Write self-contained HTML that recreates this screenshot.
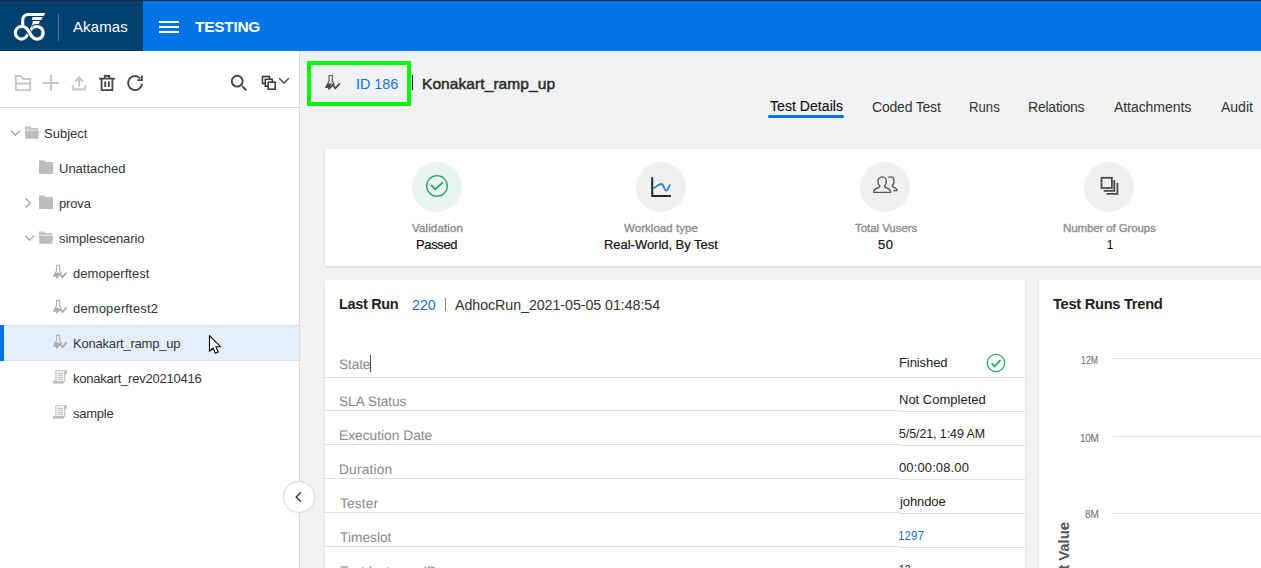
<!DOCTYPE html>
<html lang="en">
<head>
<meta charset="utf-8">
<title>Akamas - Testing</title>
<style>
*{box-sizing:border-box;margin:0;padding:0}
html,body{width:1261px;height:568px;overflow:hidden;background:#f1f2f4;font-family:"Liberation Sans",sans-serif;color:#222}
.abs{position:absolute}
.t{position:absolute;white-space:nowrap;line-height:20px}
#hdr{left:0;top:0;width:1261px;height:51px;background:#0073e7}
#hdrtop{left:0;top:0;width:1261px;height:1px;background:#1c2b3a}
#brand{left:0;top:1px;width:143px;height:50px;background:#00406f}
#side{left:0;top:51px;width:300px;height:517px;background:#fff;border-right:1px solid #dcdcdc}
#tbline{left:0;top:107px;width:299px;height:1px;background:#dcdcdc}
.tr{color:#323435}
#sel{left:0;top:325px;width:299px;height:36px;background:#e5effc;border-top:1px solid #dbe1e8;border-bottom:1px solid #dbe1e8}
#selbar{left:0;top:325px;width:4px;height:36px;background:#0073e7}
.card{position:absolute;background:#fff;box-shadow:0 1px 2px rgba(0,0,0,.12)}
.circ{position:absolute;width:50px;height:50px;border-radius:50%;background:#f0f0f0;top:13px}
.lab{color:#8c8c8c;-webkit-text-stroke:0.35px #8c8c8c}
.val{color:#111;-webkit-text-stroke:0.2px #111}
.fl{color:#8a8a8a;text-rendering:geometricPrecision}
.fv{color:#222}
.ln{position:absolute;height:1px;background:#dedede}
.tab{color:#323435}
/*FIT*/
#akamas{left:73px;top:17px;font-size:15px;letter-spacing:0.120px}
#testing{left:195px;top:17px;font-size:15.5px;letter-spacing:-0.300px}
#t1{left:44px;top:124px;font-size:13px;letter-spacing:0.000px}
#t2{left:59px;top:159px;font-size:13px;letter-spacing:0.000px}
#t3{left:59px;top:194px;font-size:13px;letter-spacing:-0.150px}
#t4{left:59px;top:229px;font-size:13px;letter-spacing:-0.092px}
#t5{left:73px;top:264px;font-size:13px;letter-spacing:0.055px}
#t6{left:73px;top:299px;font-size:13px;letter-spacing:0.150px}
#t7{left:73px;top:334px;font-size:13px;letter-spacing:-0.200px}
#t8{left:73px;top:369px;font-size:13px;letter-spacing:-0.221px}
#t9{left:73px;top:404px;font-size:13px;letter-spacing:-0.240px}
#id186{left:356px;top:74px;font-size:15.3px;letter-spacing:0.000px;transform:scaleX(0.94);transform-origin:0 0}
#ttl{left:422px;top:74px;font-size:15.5px;letter-spacing:0.080px}
#tb1{left:770px;top:96px;font-size:14px;letter-spacing:0.055px}
#tb2{left:872px;top:97px;font-size:14px;letter-spacing:-0.200px}
#tb3{left:969px;top:97px;font-size:14px;letter-spacing:0.000px;transform:scaleX(0.94);transform-origin:0 0}
#tb4{left:1028px;top:97px;font-size:14px;letter-spacing:-0.225px}
#tb5{left:1114px;top:97px;font-size:14px;letter-spacing:-0.060px}
#tb6{left:1221px;top:97px;font-size:14px;letter-spacing:0.000px}
#l1{left:412px;top:218px;font-size:11.5px;letter-spacing:0.133px}
#v1{left:416px;top:235px;font-size:13px;letter-spacing:-0.360px}
#l2{left:624px;top:218px;font-size:11.5px;letter-spacing:0.050px}
#v2{left:604px;top:235px;font-size:13px;letter-spacing:-0.033px}
#l3{left:855px;top:218px;font-size:11.5px;letter-spacing:-0.055px}
#v3{left:878px;top:235px;font-size:13px;letter-spacing:0.600px}
#l4{left:1063px;top:218px;font-size:11.5px;letter-spacing:-0.120px}
#v4{left:1107px;top:235px;font-size:13px;letter-spacing:0.000px;transform:scaleX(0.85);transform-origin:0 0}
#lr{left:339px;top:294px;font-size:14.5px;letter-spacing:-0.343px}
#n220{left:412px;top:295px;font-size:15px;letter-spacing:0.000px;transform:scaleX(0.95);transform-origin:0 0}
#adhoc{left:455px;top:295px;font-size:15px;letter-spacing:-0.067px;transform:scaleX(0.95);transform-origin:0 0}
#f1{left:339px;top:355px;font-size:13.75px;letter-spacing:-0.150px}
#f2{left:339px;top:392px;font-size:13.75px;letter-spacing:-0.067px}
#f3{left:339px;top:426px;font-size:13.75px;letter-spacing:0.000px}
#f4{left:339px;top:460px;font-size:13.75px;letter-spacing:0.171px}
#f5{left:340px;top:494px;font-size:13.75px;letter-spacing:0.120px}
#f6{left:340px;top:528px;font-size:13.75px;letter-spacing:0.000px}
#f7{left:340px;top:562px;font-size:13.75px;letter-spacing:-0.120px}
#g1{left:899px;top:353px;font-size:13px;letter-spacing:-0.086px}
#g2{left:899px;top:390px;font-size:13px;letter-spacing:0.000px}
#g3{left:899px;top:424px;font-size:13px;letter-spacing:-0.043px;transform:scaleX(0.95);transform-origin:0 0}
#g4{left:899px;top:458px;font-size:13px;letter-spacing:0.120px}
#g5{left:900px;top:492px;font-size:13px;letter-spacing:-0.100px}
#g6{left:898px;top:526px;font-size:13px;letter-spacing:0.200px;transform:scaleX(0.88);transform-origin:0 0}
#g7{left:899px;top:560px;font-size:13px;letter-spacing:0.000px;transform:scaleX(0.8);transform-origin:0 0}
#trt{left:1053px;top:294px;font-size:14.7px;letter-spacing:-0.300px}
#y1{left:1081px;top:351px;font-size:10px;letter-spacing:0.000px;transform:scaleX(0.88);transform-origin:0 0}
#y2{left:1080px;top:429px;font-size:10px;letter-spacing:-0.300px}
#y3{left:1085px;top:505px;font-size:10px;letter-spacing:0.000px}
/*ENDFIT*/
</style>
</head>
<body>
<!-- header -->
<div class="abs" id="hdr"></div>
<div class="abs" id="brand"></div>
<div class="abs" id="hdrtop"></div>
<svg class="abs" style="left:0;top:0" width="60" height="51" viewBox="0 0 60 51">
  <g fill="none" stroke="#fff" stroke-width="3.100">
    <path d="M34.800 23 L31 29.700 C29.400 32.600 26.400 39.100 21.600 39.100 A6.300 6.300 0 0 1 21.600 26.500"/>
    <path d="M22.700 27 V20.600 C22.700 17.200 24.700 14.500 28.400 14.500 H44"/>
  </g>
  <path d="M25.500 27.200 C27.600 28.400 28.400 30.600 29.600 32.800 C31.100 35.800 32.800 39.100 36.800 39.100 A6.300 6.300 0 1 0 32.700 28.100" fill="none" stroke="#00406f" stroke-width="4.800"/>
  <path d="M21.400 26.500 C26.300 26.500 27.900 29.600 29.600 32.800 C31.100 35.800 32.800 39.100 36.800 39.100 A6.300 6.300 0 1 0 32.900 27.900" fill="none" stroke="#fff" stroke-width="3.100"/>
  <path d="M27 12.900 H45.300 L43.900 16 H27 Z M32.600 17.100 H42.700 L41.300 19.900 H31.800 Z M32.900 20.900 H40.100 L38.600 24 H32.300 Z" fill="#fff"/>
</svg>
<div class="abs" style="left:58px;top:14px;width:1px;height:27px;background:#4d7a9c"></div>
<div class="t" style="color:#fff" id="akamas">Akamas</div>
<svg class="abs" style="left:159px;top:20px" width="20" height="14" viewBox="0 0 20 14"><path d="M0 2h20M0 7h20M0 12h20" stroke="#fff" stroke-width="2" fill="none"/></svg>
<div class="t" style="font-weight:bold;color:#fff" id="testing">TESTING</div>

<!-- sidebar -->
<div class="abs" id="side"></div>
<div class="abs" id="tbline"></div>
<!-- toolbar icons -->
<svg class="abs" style="left:14px;top:74px" width="18" height="18" viewBox="0 0 18 18" fill="none" stroke="#c6c6c6" stroke-width="1.9"><path d="M1.8 16.1V1.9h4.800l2.600 3.100h7v11.100z M1.8 9.5h14.4"/></svg>
<svg class="abs" style="left:42px;top:74px" width="18" height="18" viewBox="0 0 18 18" fill="none" stroke="#c6c6c6" stroke-width="1.9"><path d="M9 1v16M1 9h16"/></svg>
<svg class="abs" style="left:70px;top:74px" width="18" height="18" viewBox="0 0 18 18" fill="none" stroke="#c6c6c6" stroke-width="1.9"><path d="M2.8 11.300v4.100h12.4v-4.100M9 12.400V4M5.200 7.400l3.800-3.800 3.800 3.800" stroke-width="2.100"/></svg>
<svg class="abs" style="left:98px;top:74px" width="18" height="18" viewBox="0 0 18 18" fill="none" stroke="#444" stroke-width="1.8"><path d="M1 4.6h16M6.8 4.4V1.9h4.4v2.5M3.6 4.6v11.6h10.8V4.6M7.2 7.4v5.6M10.8 7.4v5.6"/></svg>
<svg class="abs" style="left:126px;top:74px" width="18" height="18" viewBox="0 0 18 18" fill="none" stroke="#444" stroke-width="1.8"><path d="M16 9.600A7 7 0 1 1 14.200 4.300M15.900 1.500v4.700h-4.700"/></svg>
<svg class="abs" style="left:230px;top:74px" width="18" height="18" viewBox="0 0 18 18" fill="none" stroke="#444" stroke-width="1.9"><circle cx="7.2" cy="7.2" r="5.4"/><path d="M12.100 12.100l4.300 4.300"/></svg>
<svg class="abs" style="left:261px;top:75px" width="16" height="16" viewBox="0 0 16 16" fill="#fff" stroke="#333" stroke-width="1.5"><rect x="1.5" y="1.5" width="7" height="7"/><rect x="4.3" y="4.3" width="7" height="7"/><rect x="7.2" y="7.2" width="7" height="7"/></svg>
<svg class="abs" style="left:278px;top:76px" width="12" height="10" viewBox="0 0 12 10" fill="none" stroke="#444" stroke-width="1.3"><path d="M1.2 2.2l4.8 4.8 4.8-4.8"/></svg>

<!-- tree -->
<div class="abs" id="sel"></div>
<div class="abs" id="selbar"></div>
<div class="abs" id="tree" style="left:0;top:0;width:299px;height:568px">
  <div class="t tr" id="t1">Subject</div>
  <div class="t tr" id="t2">Unattached</div>
  <div class="t tr" id="t3">prova</div>
  <div class="t tr" id="t4">simplescenario</div>
  <div class="t tr" id="t5">demoperftest</div>
  <div class="t tr" id="t6">demoperftest2</div>
  <div class="t tr" id="t7">Konakart_ramp_up</div>
  <div class="t tr" id="t8">konakart_rev20210416</div>
  <div class="t tr" id="t9">sample</div>
</div>
<svg class="abs" style="left:0;top:108px" width="299" height="330" viewBox="0 108 299 330">
  <defs>
    <g id="chevd"><path d="M-4.500 -2.400L0 2.100L4.500 -2.400" fill="none" stroke="#999" stroke-width="1.1"/></g>
    <g id="chevr"><path d="M-2.300 -4.500L2.200 0L-2.300 4.500" fill="none" stroke="#999" stroke-width="1.1"/></g>
    <g id="fopen"><path d="M0 1.6h5.4l1.2 1.4h6.8v1.8H0z" fill="#c2c2c2"/><path d="M0 5.6h14l-0.6 8.2H0.4z" fill="#bdbdbd"/></g>
    <g id="fclosed"><path d="M0 0.6h5.6l1.2 1.4H14v12H0z" fill="#bdbdbd"/><path d="M5.4 1.5h8.6" stroke="#fff" stroke-width="0.7"/></g>
    <g id="flask" fill="none" transform="scale(0.91)"><path d="M3.500 0.500H7.800M4 0.500V6.200L0.900 12.300M7.300 0.500V6.200L9.600 9.600" stroke="#b5b5b5" stroke-width="1.300"/><path d="M2.300 8.500L7.200 8.200L4.500 13H0z" fill="#adadad"/><path d="M3.400 14.500L7.900 9.900L10.300 13.300L14.800 8.400" stroke="#a8a8a8" stroke-width="1.800"/></g>
    <g id="script" fill="none" stroke="#bdbdbd" stroke-width="1.100"><path d="M2.900 11V0.800H13.200V3.300H11.600M11.700 1V12"/><path d="M4.600 3.300h5.400M4.600 5.300h5.400M4.600 7.300h5.400M4.600 9.200h5.400" stroke="#b0b0b0" stroke-width="0.900"/><path d="M0 12.200h10.800" stroke-width="2.700" stroke="#bbb"/><path d="M11.800 0.800h1.800v2.600h-1.800z" fill="#bdbdbd" stroke="none"/></g>
  </defs>
  <use href="#chevd" x="15.5" y="133"/>
  <use href="#fopen" x="25" y="125"/>
  <use href="#fclosed" x="39" y="160"/>
  <use href="#chevr" x="28" y="203"/>
  <use href="#fclosed" x="39" y="195"/>
  <use href="#chevd" x="29.5" y="238"/>
  <use href="#fopen" x="39" y="230"/>
  <use href="#flask" x="53" y="265"/>
  <use href="#flask" x="53" y="300"/>
  <use href="#flask" x="53" y="335"/>
  <use href="#script" x="53" y="370"/>
  <use href="#script" x="53" y="405"/>
</svg>
<!-- mouse cursor -->
<svg class="abs" style="left:208px;top:334px" width="14" height="22" viewBox="0 0 14 22"><path d="M1.500 1.700V17.300L5 14L7.400 19.300L10.300 18L7.900 12.700H12.500Z" fill="#fff" stroke="#0c0c14" stroke-width="1.150" stroke-linejoin="round"/></svg>

<!-- collapse handle -->
<div class="abs" style="left:283px;top:481px;width:32px;height:32px;border-radius:50%;background:#fff;border:1px solid #dcdcdc;box-shadow:0 0 2px rgba(0,0,0,.08)"></div>
<svg class="abs" style="left:292px;top:490px" width="14" height="14" viewBox="0 0 14 14" fill="none" stroke="#333" stroke-width="1.4"><path d="M8.8 2.2L4.2 7l4.6 4.8"/></svg>

<!-- title -->
<div class="abs" style="left:307px;top:61px;width:104px;height:45px;border:4px solid #05f805"></div>
<svg class="abs" style="left:325px;top:75px" width="17" height="16" viewBox="0 0 17 16" fill="none"><path d="M3.500 0.500H7.800M4 0.500V6.200L0.900 12.300M7.300 0.500V6.200L9.600 9.600" stroke="#5c5c5c" stroke-width="1.200"/><path d="M2.300 8.500L7.200 8.200L4.500 13H0z" fill="#4c4c4c"/><path d="M3.400 14.500L7.900 9.900L10.300 13.300L14.800 8.400" stroke="#474747" stroke-width="1.700"/></svg>
<div class="t" style="color:#1570e3" id="id186">ID 186</div>
<div class="abs" style="left:412px;top:75px;width:1px;height:15px;background:#222"></div>
<div class="t" style="color:#2a2a2a;-webkit-text-stroke:0.5px #2a2a2a" id="ttl">Konakart_ramp_up</div>

<!-- tabs -->
<div class="t tab" style="color:#111;-webkit-text-stroke:0.15px #111" id="tb1">Test Details</div>
<div class="abs" style="left:768px;top:115px;width:76px;height:3px;border-radius:1.5px;background:#0073e7"></div>
<div class="t tab" id="tb2">Coded Test</div>
<div class="t tab" id="tb3">Runs</div>
<div class="t tab" id="tb4">Relations</div>
<div class="t tab" id="tb5">Attachments</div>
<div class="t tab" id="tb6">Audit</div>

<!-- summary card -->
<div class="card" style="left:325px;top:149px;width:960px;height:117px">
  <div class="circ" style="left:87px;background:#e8f5ee"></div>
  <div class="circ" style="left:311px"></div>
  <div class="circ" style="left:535px"></div>
  <div class="circ" style="left:759px"></div>
  <svg class="abs" style="left:100px;top:25px" width="24" height="24" viewBox="0 0 24 24" fill="none" stroke="#27a25f" stroke-width="1.300"><circle cx="12" cy="11.900" r="10.300"/><path d="M6.200 11.200L10.300 15.400L17.800 8.400" stroke-width="1.700"/></svg>
  <svg class="abs" style="left:324px;top:26px" width="24" height="24" viewBox="0 0 24 24" fill="none"><path d="M3.200 2.300V20.900H21.900" stroke="#262626" stroke-width="2"/><path d="M4.200 13.200C7 12.600 9.500 9 12.300 9C15 9 15 15.600 17.300 15.600C19.300 15.600 19.600 10.600 21.500 9.500" stroke="#2f7fd3" stroke-width="1.800"/></svg>
  <svg class="abs" style="left:546px;top:25px" width="28" height="22" viewBox="0 0 28 22" fill="none" stroke="#555" stroke-width="1.400"><path d="M11.200 2.900C13.800 2.900 15.400 4.900 15.400 7.200C15.400 9.600 14.500 11 13.600 11.800C13.400 12.600 13.800 13.200 14.800 13.600L18 15C19 15.500 19.400 16.300 19.400 17.200V18.400H2.800V17.200C2.800 16.300 3.200 15.500 4.200 15L7.600 13.600C8.600 13.200 9 12.600 8.800 11.800C7.900 11 7 9.600 7 7.200C7 4.900 8.600 2.900 11.200 2.900Z"/><path d="M17.200 3.300C17.900 3 18.600 2.900 19.200 2.900C21.600 2.900 23 4.800 23 7C23 9.200 22.200 10.600 21.300 11.400C21.100 12.200 21.500 12.800 22.400 13.200L24.400 14.100C25.600 14.700 26 15.500 26 16.600H22.100"/></svg>
  <svg class="abs" style="left:774px;top:26px" width="22" height="22" viewBox="0 0 22 22" fill="none" stroke="#4a4a4a" stroke-width="1.800"><rect x="2.500" y="2.800" width="10.400" height="10.200"/><path d="M4.700 15.800H15.300V5.100M7.500 18.900H18.400V7.900"/></svg>
</div>
  <div class="t lab" id="l1">Validation</div>
  <div class="t val" id="v1">Passed</div>
  <div class="t lab" id="l2">Workload type</div>
  <div class="t val" id="v2">Real-World, By Test</div>
  <div class="t lab" id="l3">Total Vusers</div>
  <div class="t val" id="v3">50</div>
  <div class="t lab" id="l4">Number of Groups</div>
  <div class="t val" id="v4">1</div>

<!-- last run card -->
<div class="card" style="left:325px;top:280px;width:700px;height:300px"></div>
<div class="t" style="font-weight:bold;color:#222" id="lr">Last Run</div>
<div class="t" style="color:#1570e3" id="n220">220</div>
<div class="abs" style="left:445px;top:298px;width:1px;height:13px;background:#858585"></div>
<div class="t" style="color:#333" id="adhoc">AdhocRun_2021-05-05 01:48:54</div>

<div class="t fl" id="f1">State</div>
<div class="abs" style="left:370px;top:355px;width:1px;height:17px;background:#4a4a4a"></div>
<div class="t fl" id="f2">SLA Status</div>
<div class="t fl" id="f3">Execution Date</div>
<div class="t fl" id="f4">Duration</div>
<div class="t fl" id="f5">Tester</div>
<div class="t fl" id="f6">Timeslot</div>
<div class="t fl" id="f7">Test Instance ID</div>

<div class="ln" style="left:325px;top:377px;width:700px"></div>
<div class="ln" style="left:325px;top:410px;width:574px"></div><div class="ln" style="left:899px;top:411px;width:126px"></div>
<div class="ln" style="left:325px;top:444px;width:574px"></div><div class="ln" style="left:899px;top:445px;width:126px"></div>
<div class="ln" style="left:325px;top:478px;width:574px"></div><div class="ln" style="left:899px;top:479px;width:126px"></div>
<div class="ln" style="left:325px;top:512px;width:574px"></div><div class="ln" style="left:899px;top:513px;width:126px"></div>
<div class="ln" style="left:325px;top:546px;width:574px"></div><div class="ln" style="left:899px;top:547px;width:126px"></div>

<div class="t fv" id="g1">Finished</div>
<div class="t fv" id="g2">Not Completed</div>
<div class="t fv" id="g3">5/5/21, 1:49 AM</div>
<div class="t fv" id="g4">00:00:08.00</div>
<div class="t fv" id="g5">johndoe</div>
<div class="t fv" style="color:#1570e3" id="g6">1297</div>
<div class="t fv" id="g7">12</div>
<svg class="abs" style="left:985px;top:352px" width="22" height="22" viewBox="0 0 22 22" fill="none" stroke="#2ea866" stroke-width="1.3"><circle cx="11" cy="11" r="8.700"/><path d="M6.600 11.300l3 3 5.800-6.200" stroke-width="1.900"/></svg>

<!-- trend card -->
<div class="card" style="left:1039px;top:280px;width:260px;height:300px"></div>
<div class="t" style="font-weight:bold;color:#222" id="trt">Test Runs Trend</div>
<div class="t" style="color:#666" id="y1">12M</div>
<div class="t" style="color:#666" id="y2">10M</div>
<div class="t" style="color:#666" id="y3">8M</div>
<div class="ln" style="left:1113px;top:358px;width:160px;background:#e4e4e4"></div>
<div class="ln" style="left:1113px;top:436px;width:160px;background:#e4e4e4"></div>
<div class="ln" style="left:1113px;top:513px;width:160px;background:#e4e4e4"></div>
<div class="abs" style="left:1056px;top:522px;width:0;height:0"><div id="yax" style="position:absolute;right:0;top:0;white-space:nowrap;line-height:1;font-size:15px;letter-spacing:-0.1px;font-weight:bold;color:#555;transform:rotate(-90deg);transform-origin:100% 0">Result Value</div></div>
</body>
</html>
